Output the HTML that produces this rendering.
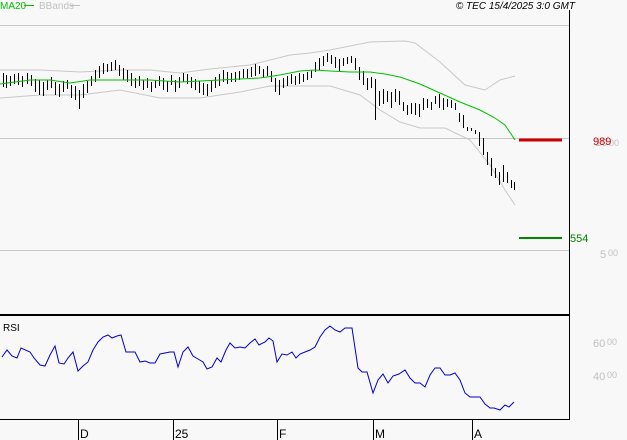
<!DOCTYPE html>
<html><head><style>
body{margin:0;background:#f8f8f8;}
svg{display:block;font-family:"Liberation Sans",sans-serif;}
</style></head><body>
<svg width="627" height="440" viewBox="0 0 627 440" xmlns="http://www.w3.org/2000/svg">
<rect width="627" height="440" fill="#f8f8f8"/>
<g stroke="#c8c8c8" stroke-width="1">
<line x1="0" y1="25.5" x2="569" y2="25.5"/>
<line x1="0" y1="138.5" x2="569" y2="138.5"/>
<line x1="0" y1="250.5" x2="569" y2="250.5"/>
</g>
<line x1="569.5" y1="10" x2="569.5" y2="420" stroke="#000"/>
<line x1="0" y1="315" x2="570" y2="315" stroke="#000" stroke-width="2"/>
<line x1="0" y1="419.5" x2="570" y2="419.5" stroke="#000"/>
<g stroke="#000"><line x1="78.5" y1="419" x2="78.5" y2="440"/><line x1="173.5" y1="419" x2="173.5" y2="440"/><line x1="277.5" y1="419" x2="277.5" y2="440"/><line x1="373.5" y1="419" x2="373.5" y2="440"/><line x1="472.5" y1="419" x2="472.5" y2="440"/></g>
<g font-size="12" fill="#000"><text x="80" y="438">D</text><text x="175" y="438">25</text><text x="279" y="438">F</text><text x="375" y="438">M</text><text x="474" y="438">A</text></g>
<polyline fill="none" stroke="#c8c8c8" points="0,70 40,70 80,72 120,70 150,70 180,73 210,69 250,65 290,55 310,53 330,50 370,42 405,41 415,43 440,62 465,85 485,90 500,80 515,76"/>
<polyline fill="none" stroke="#c8c8c8" points="0,98 40,95 80,95 120,90 160,98 200,98 240,92 270,86 300,86 330,86 360,95 380,110 400,122 420,128 445,128 470,140 490,165 505,190 515,205"/>
<g stroke="#000" stroke-width="1" fill="none" shape-rendering="crispEdges" transform="translate(0.5,0)">
<path d="M3 73V87M6 75V88M10 76V86M14 74V84M18 73V85M22 76V87M27 73V84M31 75V86M35 79V92M39 80V95M43 82V96M47 80V90M51 77V88M55 82V95M59 84V97M63 81V92M67 80V89M71 85V98M75 86V100M79 90V109M83 84V98M87 81V93M91 76V86M95 70V82M99 66V78M103 63V74M107 64V72M111 62V71M115 60V70M119 65V76M123 68V80M127 70V82M131 73V86M135 78V88M139 76V86M143 80V90M147 78V88M151 82V92M155 80V88M159 76V86M163 78V90M167 81V92M171 75V85M175 80V92M179 77V88M183 73V82M187 74V84M191 77V88M195 79V90M199 81V93M203 83V95M207 84V96M211 80V92M215 77V88M219 74V86M223 70V82M227 72V84M231 73V82M235 72V82M239 71V80M243 69V78M247 69V78M251 67V77M255 64V76M259 66V74M263 69V78M267 66V76M271 71V82M275 78V92M279 80V95M283 78V88M287 76V86M291 74V84M295 76V85M299 73V84M303 74V82M307 72V80M311 70V78M315 62V72M319 58V70M323 56V66M327 53V62M331 55V64M335 57V68M339 59V72M343 58V66M347 57V64M351 56V63M355 58V70M359 67V80M363 71V85M367 78V90M371 77V88M375 79V120M379 91V106M383 89V104M387 91V102M391 92V108M395 89V102M399 91V105M403 102V111M407 105V115M411 103V114M415 103V115M419 104V117M423 98V110M427 99V108M431 102V110M435 96V104M439 94V108M443 98V110M447 99V107M451 100V108M455 103V110M459 113V122M463 115V128M467 127V131M471 128V131M475 130V134M479 132V146M483 138V155M487 152V165M491 158V176M495 168V178M499 172V185M503 165V182M507 172V183M511 180V188M514 182V190"/>
</g>
<polyline fill="none" stroke="#00c000" stroke-width="1" points="0,84 30,80 50,80 70,83 90,80 120,80 150,80 180,82 220,80 260,78 280,75 300,71 315,70 330,71 350,72 370,72 385,74 400,77 420,84 440,93 460,102 480,110 495,118 505,125 515,140"/>
<line x1="519" y1="140" x2="562" y2="140" stroke="#cc0000" stroke-width="3"/>
<line x1="519" y1="238" x2="562" y2="238" stroke="#008800" stroke-width="2"/>
<g font-size="11" fill="#c0c0c0"><text x="595" y="146">10</text><text x="609" y="146" font-size="9">00</text><text x="600" y="258">5</text><text x="608" y="256" font-size="9">00</text><text x="593" y="347">60</text><text x="607" y="345" font-size="9">00</text><text x="593" y="380">40</text><text x="607" y="378" font-size="9">00</text></g>
<text x="593" y="145" font-size="11" fill="#cc0000">989</text>
<text x="570" y="242" font-size="11" fill="#008800">554</text>
<polyline fill="none" stroke="#0000cc" stroke-width="1" points="2,357 7,350 12,356 17,358 21,348 30,352 34,358 40,365 45,366 50,355 55,346 59,363 64,364 68,358 73,352 78,371 83,366 88,362 93,350 98,342 103,337 108,335 112,338 117,336 121,335 126,352 135,352 140,362 145,361 150,363 155,363 160,354 170,352 174,352 178,367 183,352 188,347 193,356 198,359 203,362 207,369 212,367 217,358 221,362 226,350 230,343 235,348 240,347 245,348 250,343 255,339 259,345 265,342 269,338 273,341 277,362 282,354 287,355 292,352 296,358 300,354 305,352 310,350 315,347 320,337 325,330 330,326 335,330 340,332 345,328 352,328 358,368 362,372 367,372 373,393 378,380 383,374 388,383 393,376 399,374 405,370 410,378 415,383 420,383 425,387 430,375 435,368 440,368 445,375 450,375 455,373 460,380 465,393 470,397 475,397 480,397 485,404 490,408 494,408 500,410 505,405 509,407 514,402"/>
<text x="3" y="331" font-size="10" fill="#000">RSI</text>
<line x1="24" y1="5.5" x2="34" y2="5.5" stroke="#00c000"/>
<text x="0" y="9" font-size="10" fill="#00c000">MA20</text>
<text x="39" y="9" font-size="10" fill="#c0c0c0">BBands</text>
<line x1="70" y1="5.5" x2="80" y2="5.5" stroke="#c0c0c0"/>
<text x="575" y="9" font-size="10" font-style="italic" fill="#000" text-anchor="end">© TEC 15/4/2025 3:0 GMT</text>
</svg>
</body></html>
